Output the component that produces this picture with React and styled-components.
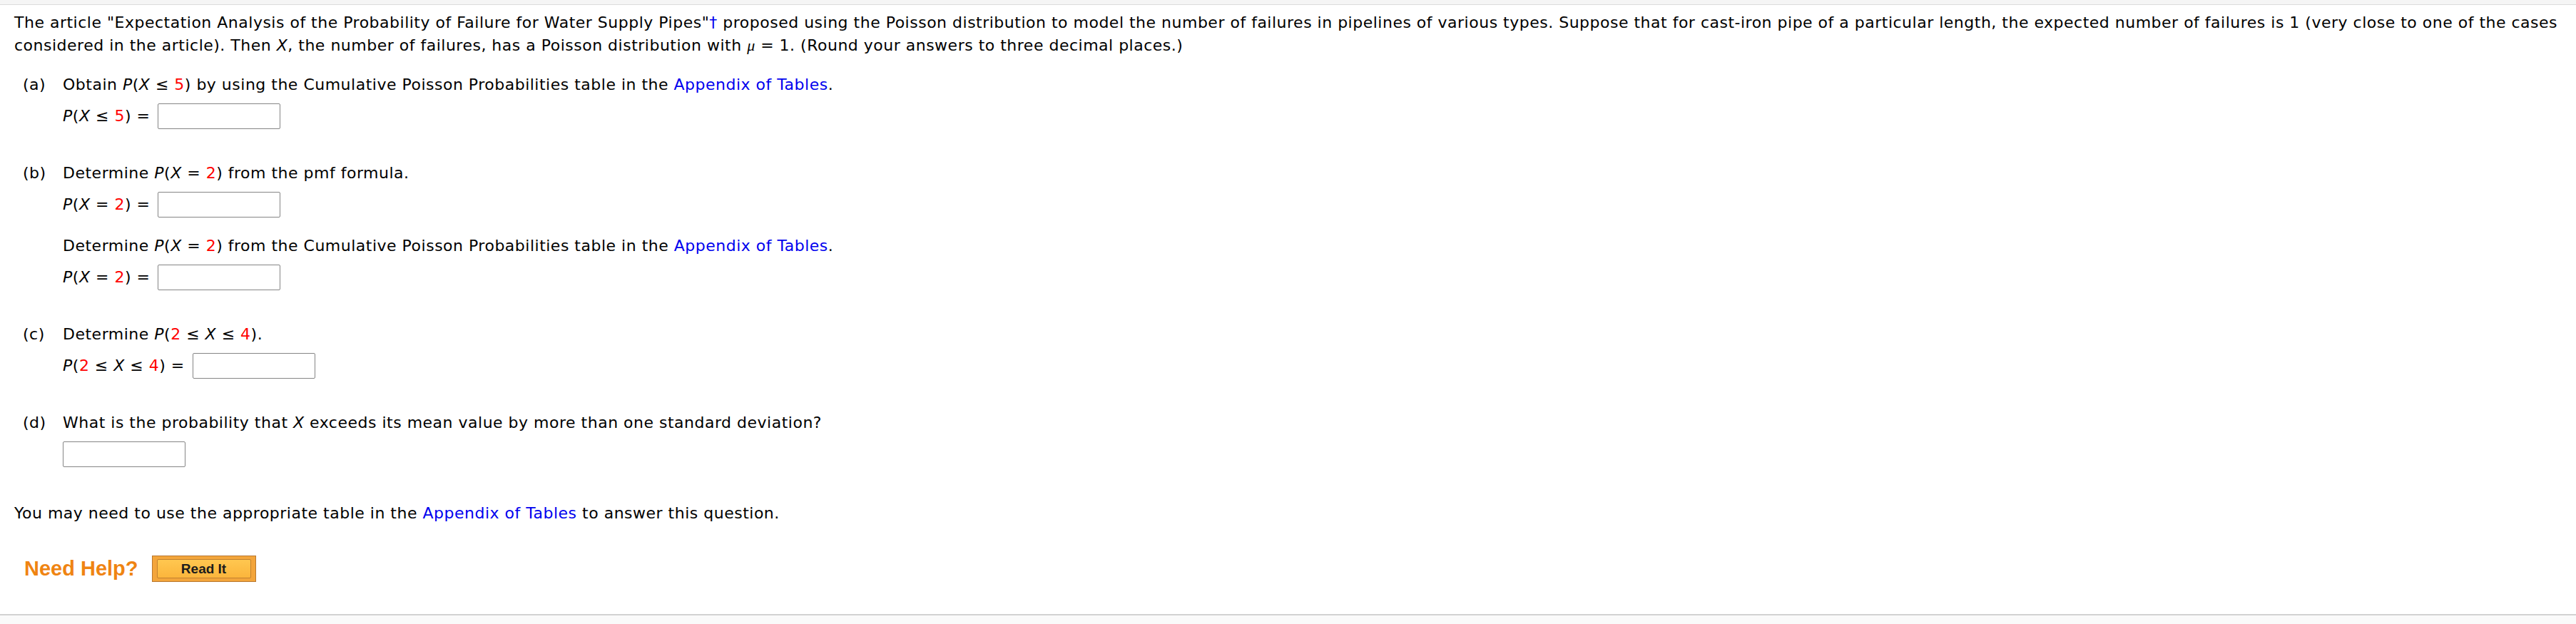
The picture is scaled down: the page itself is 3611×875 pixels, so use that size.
import React from "react";
import styled, { createGlobalStyle } from "styled-components";

const GlobalStyle = createGlobalStyle`
  html, body {
    margin: 0;
    padding: 0;
    background: #ffffff;
  }
  body {
    font-family: "DejaVu Sans", Verdana, sans-serif;
    font-size: 22px;
    line-height: 32px;
    letter-spacing: 0.5px;
    color: #000;
  }
`;

export default function App() {
  return (
    <Page>
      <GlobalStyle />
      <TopBar />
      <Question>
        <Intro>
          The article "Expectation Analysis of the Probability of Failure for Water Supply
          Pipes"<Link>†</Link> proposed using the Poisson distribution to model the number of
          failures in pipelines of various types. Suppose that for cast-iron pipe of a particular
          length, the expected number of failures is 1 (very close to one of the cases considered
          in the article). Then <Var>X</Var>, the number of failures, has a Poisson distribution
          with <Mu>μ</Mu> = 1. (Round your answers to three decimal places.)
        </Intro>

        <PartList>
          <Part>
            <Label>(a)</Label>
            <Body>
              <Text>
                Obtain <Var>P</Var>(<Var>X</Var> ≤ <Num>5</Num>) by using the Cumulative Poisson
                Probabilities table in the <Link>Appendix of Tables</Link>.
              </Text>
              <AnswerRow>
                <Eq>
                  <Var>P</Var>(<Var>X</Var> ≤ <Num>5</Num>) =
                </Eq>
                <Input />
              </AnswerRow>
            </Body>
          </Part>

          <Part>
            <Label>(b)</Label>
            <Body>
              <Text>
                Determine <Var>P</Var>(<Var>X</Var> = <Num>2</Num>) from the pmf formula.
              </Text>
              <AnswerRow>
                <Eq>
                  <Var>P</Var>(<Var>X</Var> = <Num>2</Num>) =
                </Eq>
                <Input />
              </AnswerRow>
              <Text $spaced>
                Determine <Var>P</Var>(<Var>X</Var> = <Num>2</Num>) from the Cumulative Poisson
                Probabilities table in the <Link>Appendix of Tables</Link>.
              </Text>
              <AnswerRow>
                <Eq>
                  <Var>P</Var>(<Var>X</Var> = <Num>2</Num>) =
                </Eq>
                <Input />
              </AnswerRow>
            </Body>
          </Part>

          <Part>
            <Label>(c)</Label>
            <Body>
              <Text>
                Determine <Var>P</Var>(<Num>2</Num> ≤ <Var>X</Var> ≤ <Num>4</Num>).
              </Text>
              <AnswerRow>
                <Eq>
                  <Var>P</Var>(<Num>2</Num> ≤ <Var>X</Var> ≤ <Num>4</Num>) =
                </Eq>
                <Input />
              </AnswerRow>
            </Body>
          </Part>

          <Part>
            <Label>(d)</Label>
            <Body>
              <Text>
                What is the probability that <Var>X</Var> exceeds its mean value by more than one
                standard deviation?
              </Text>
              <AnswerRow>
                <Input />
              </AnswerRow>
            </Body>
          </Part>
        </PartList>

        <Note>
          You may need to use the appropriate table in the <Link>Appendix of Tables</Link> to
          answer this question.
        </Note>

        <HelpRow>
          <HelpTitle>Need Help?</HelpTitle>
          <ReadButton>
            <ReadInner>Read It</ReadInner>
          </ReadButton>
        </HelpRow>
      </Question>
      <BottomBar />
    </Page>
  );
}

const Page = styled.div`
  width: 100%;
  min-height: 875px;
  display: flex;
  flex-direction: column;
`;
const TopBar = styled.div`
  height: 6px;
  background: #f5f5f5;
  border-bottom: 1px solid #dcdcdc;
`;
const Question = styled.div`
  padding: 0 20px;
`;
const Intro = styled.p`
  margin: 9px 0 0;
`;
const Link = styled.span`
  color: #0000ee;
`;
const Var = styled.i`
  font-style: italic;
`;
const Num = styled.span`
  color: #ff0000;
`;
const Mu = styled.i`
  font-family: "Liberation Serif", "Times New Roman", serif;
  font-style: italic;
  line-height: 1;
`;
const PartList = styled.div`
  margin-top: 23px;
  padding-left: 12px;
  display: flex;
  flex-direction: column;
  gap: 46px;
`;
const Part = styled.div`
  display: flex;
  align-items: flex-start;
`;
const Label = styled.div`
  width: 56px;
  flex-shrink: 0;
`;
const Body = styled.div`
  flex: 1;
  display: flex;
  flex-direction: column;
`;
const Text = styled.div`
  margin-top: ${(p) => (p.$spaced ? "24px" : "0")};
`;
const AnswerRow = styled.div`
  margin-top: 10px;
  display: flex;
  align-items: center;
  gap: 11px;
`;
const Eq = styled.span`
  white-space: nowrap;
`;
const Input = styled.div`
  width: 172px;
  height: 36px;
  box-sizing: border-box;
  border: 1px solid #858585;
  border-radius: 2px;
  background: #fff;
`;
const Note = styled.p`
  margin: 49px 0 0;
`;
const HelpRow = styled.div`
  margin-top: 43px;
  padding-left: 14px;
  display: flex;
  align-items: center;
  gap: 19px;
  letter-spacing: 0;
`;
const HelpTitle = styled.span`
  font-family: "Liberation Sans", Arial, sans-serif;
  font-weight: bold;
  font-size: 29px;
  line-height: 33px;
  color: #ef8412;
`;
const ReadButton = styled.div`
  width: 146px;
  height: 37px;
  box-sizing: border-box;
  border: 1px solid #b8772f;
  background: #f3a53b;
  padding: 4px 6px;
  display: flex;
`;
const ReadInner = styled.div`
  flex: 1;
  box-sizing: border-box;
  border: 1px solid #c2812f;
  border-radius: 2px;
  background: linear-gradient(#ffc750, #fbb53c);
  display: flex;
  align-items: center;
  justify-content: center;
  font-family: "Liberation Sans", Arial, sans-serif;
  font-weight: bold;
  font-size: 19px;
  line-height: 20px;
  color: #1c1c1c;
`;
const BottomBar = styled.div`
  margin-top: 45px;
  flex: 1;
  border-top: 2px solid #d2d2d2;
  background: #fafafa;
`;
